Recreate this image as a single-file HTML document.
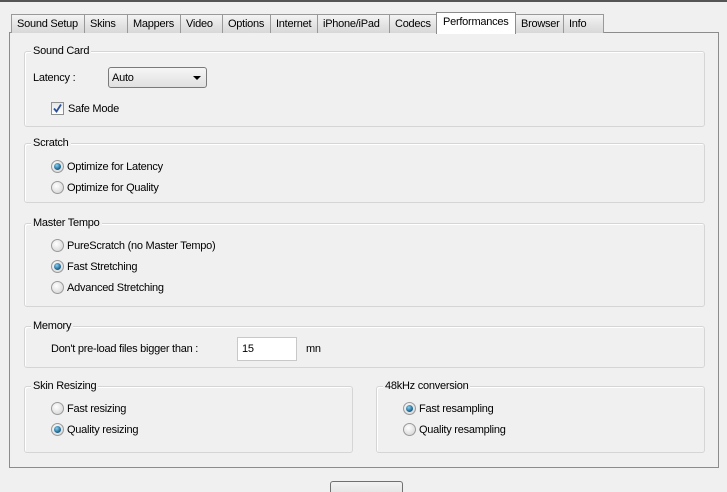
<!DOCTYPE html>
<html style="overflow:hidden"><head><meta charset="utf-8"><style>
*{box-sizing:border-box;margin:0;padding:0}
html,body{overflow:hidden}
body{width:727px;height:492px;background:#f0f0f0;position:relative;font-family:"Liberation Sans",sans-serif;font-size:11px;letter-spacing:-0.25px;color:#000}
.a{position:absolute}
.topline{left:0;top:0;width:727px;height:2px;background:#555}
.tab{position:absolute;top:14px;height:19px;border:1px solid #999;border-bottom:none;background:linear-gradient(#f4f4f4,#e2e2e2 60%,#d8d8d8);padding-left:5px;line-height:18px;white-space:nowrap}
.tab.sel{top:12px;height:22px;background:#fff;z-index:3;line-height:18px;border-color:#8c8c8c;padding-left:6px}
.panel{left:9px;top:32px;width:710px;height:436px;border:1px solid #8c8c8c;background:#f0f0f0}
.grp{position:absolute;border:1px solid #d5d5d5;border-radius:3px;box-shadow:inset 1px 1px 0 #fff}
.grp .t{position:absolute;top:-8px;left:6px;background:#f0f0f0;padding:0 2px;line-height:14px}
.radio{position:absolute;width:13px;height:13px;border-radius:50%;border:1px solid #9a9a9a;background:radial-gradient(circle at 40% 35%,#fff,#ddd 70%,#cfcfcf)}
.radio.on::after{content:"";position:absolute;left:2px;top:2px;width:7px;height:7px;border-radius:50%;background:radial-gradient(circle at 40% 35%,#8ad0f0,#1f6a95 60%,#0d3d5c)}
.lbl{position:absolute;line-height:13px;white-space:nowrap;top:1px}
</style></head><body>
<div class="a topline"></div>
<div class="a panel"></div>
<div class="tab" style="left:11px;width:74px">Sound Setup</div>
<div class="tab" style="left:84px;width:44px">Skins</div>
<div class="tab" style="left:127px;width:54px">Mappers</div>
<div class="tab" style="left:180px;width:43px">Video</div>
<div class="tab" style="left:222px;width:49px">Options</div>
<div class="tab" style="left:270px;width:48px">Internet</div>
<div class="tab" style="left:317px;width:73px">iPhone/iPad</div>
<div class="tab" style="left:389px;width:48px">Codecs</div>
<div class="tab sel" style="left:436px;width:80px">Performances</div>
<div class="tab" style="left:515px;width:49px">Browser</div>
<div class="tab" style="left:563px;width:41px">Info</div>

<div class="grp" style="left:24px;top:51px;width:681px;height:76px"><span class="t">Sound Card</span></div>
<div class="lbl" style="left:33px;top:72px">Latency :</div>
<div class="a" style="left:108px;top:67px;width:99px;height:21px;border:1px solid #7a7a7a;border-radius:3px;background:linear-gradient(#f6f6f6,#e0e0e0);padding-left:3px;line-height:20px">Auto<span style="position:absolute;right:5px;top:8px;border-left:4px solid transparent;border-right:4px solid transparent;border-top:4px solid #000"></span></div>
<div class="a" style="left:51px;top:102px;width:13px;height:13px;border:1px solid #8f8f8f;background:linear-gradient(#e6e6e6,#fff)"><svg width="11" height="11" style="position:absolute;left:0;top:0"><path d="M2 5.5 L4.5 8.5 L9 1.5" stroke="#2a4e9a" stroke-width="1.8" fill="none"/></svg></div>
<div class="lbl" style="left:68px;top:103px">Safe Mode</div>

<div class="grp" style="left:24px;top:143px;width:681px;height:60px"><span class="t">Scratch</span></div>
<div class="radio on" style="left:51px;top:160px"></div><div class="lbl" style="left:67px;top:161px">Optimize for Latency</div>
<div class="radio" style="left:51px;top:181px"></div><div class="lbl" style="left:67px;top:182px">Optimize for Quality</div>

<div class="grp" style="left:24px;top:223px;width:681px;height:84px"><span class="t">Master Tempo</span></div>
<div class="radio" style="left:51px;top:239px"></div><div class="lbl" style="left:67px;top:240px">PureScratch (no Master Tempo)</div>
<div class="radio on" style="left:51px;top:260px"></div><div class="lbl" style="left:67px;top:261px">Fast Stretching</div>
<div class="radio" style="left:51px;top:281px"></div><div class="lbl" style="left:67px;top:282px">Advanced Stretching</div>

<div class="grp" style="left:24px;top:326px;width:681px;height:42px"><span class="t">Memory</span></div>
<div class="lbl" style="left:51px;top:343px">Don't pre-load files bigger than :</div>
<div class="a" style="left:237px;top:337px;width:60px;height:24px;background:#fff;border:1px solid #c8c8c8;padding-left:4px;line-height:22px">15</div>
<div class="lbl" style="left:306px;top:343px">mn</div>

<div class="grp" style="left:24px;top:386px;width:329px;height:67px"><span class="t">Skin Resizing</span></div>
<div class="radio" style="left:51px;top:402px"></div><div class="lbl" style="left:67px;top:403px">Fast resizing</div>
<div class="radio on" style="left:51px;top:423px"></div><div class="lbl" style="left:67px;top:424px">Quality resizing</div>

<div class="grp" style="left:376px;top:386px;width:329px;height:67px"><span class="t">48kHz conversion</span></div>
<div class="radio on" style="left:403px;top:402px"></div><div class="lbl" style="left:419px;top:403px">Fast resampling</div>
<div class="radio" style="left:403px;top:423px"></div><div class="lbl" style="left:419px;top:424px">Quality resampling</div>

<div class="a" style="left:330px;top:481px;width:73px;height:11px;border:1px solid #707070;border-bottom:none;border-radius:3px 3px 0 0;background:linear-gradient(#f2f2f2,#e6e6e6)"></div>
</body></html>
